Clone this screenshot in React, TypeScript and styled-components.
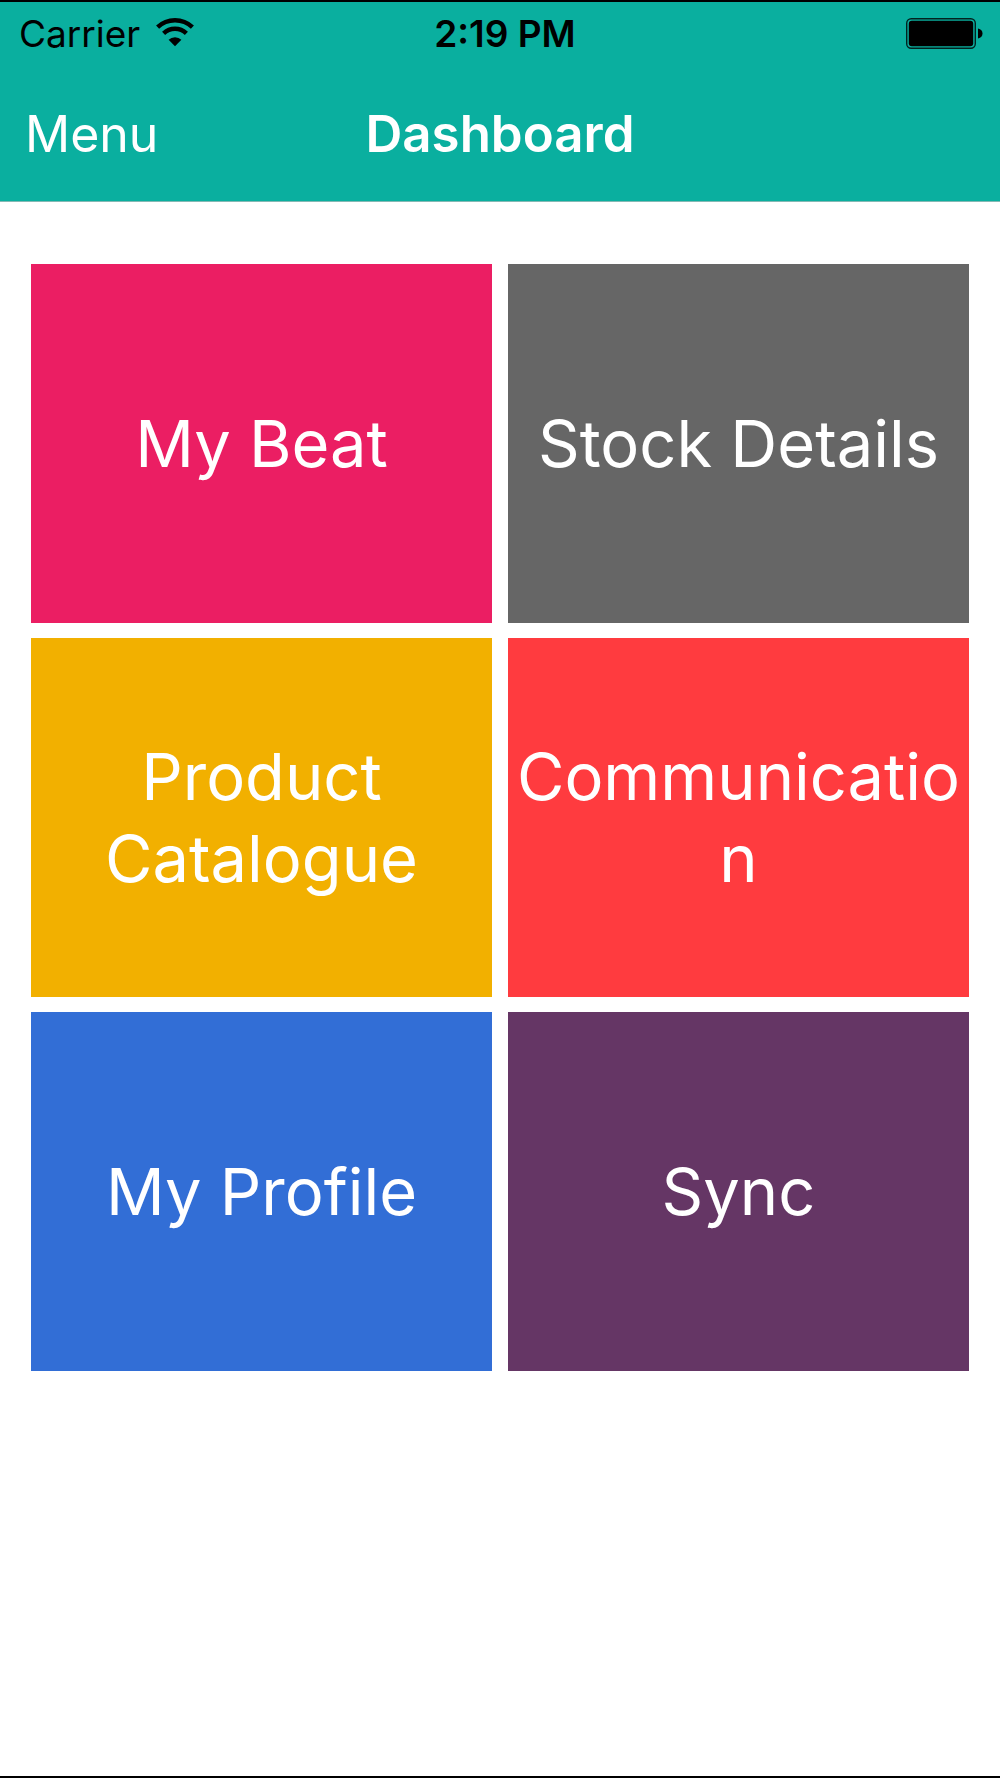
import React from "react";
import styled, { createGlobalStyle } from "styled-components";

const GlobalStyle = createGlobalStyle`
  *, *::before, *::after { box-sizing: border-box; }
  body { margin: 0; background: #fff; }
`;

const Screen = styled.div`
  display: flex;
  flex-direction: column;
  min-height: 100vh;
  border-top: 2px solid #000;
  border-bottom: 2px solid #000;
  background: #fff;
  font-family: Inter, "Liberation Sans", sans-serif;
`;

const Header = styled.header`
  background: #0aaf9f;
  color: #fff;
  border-bottom: 1px solid #84b9b4;
`;

const StatusBar = styled.div`
  display: grid;
  grid-template-columns: 1fr auto 1fr;
  align-items: center;
  height: 64px;
  padding: 0 9px 0 19px;
  color: #000;
  font-size: 37px;
  line-height: 44px;
`;

const Network = styled.div`
  display: flex;
  align-items: center;
  gap: 16px;
`;

const Clock = styled.time`
  font-weight: 600;
`;

const Power = styled.div`
  display: flex;
  justify-content: flex-end;
  padding-right: 8px;
`;

const NavBar = styled.nav`
  display: grid;
  grid-template-columns: 1fr auto 1fr;
  align-items: center;
  height: 135px;
  padding: 0 25px;
`;

const MenuButton = styled.button`
  justify-self: start;
  padding: 0;
  border: 0;
  background: none;
  color: inherit;
  font: inherit;
  font-size: 50px;
  line-height: 64px;
  cursor: pointer;
`;

const Title = styled.h1`
  margin: 0;
  font-size: 51px;
  line-height: 64px;
  font-weight: 600;
`;

const TileGrid = styled.main`
  display: grid;
  grid-template-columns: repeat(2, minmax(0, 1fr));
  grid-auto-rows: 359px;
  gap: 15px 16px;
  padding: 62px 31px;
`;

const Tile = styled.button<{ $color: string }>`
  padding: 0;
  border: 0;
  border-radius: 0;
  background: ${(p) => p.$color};
  color: #fff;
  font: inherit;
  font-size: 65px;
  line-height: 82px;
  text-align: center;
  overflow-wrap: anywhere;
  cursor: pointer;
`;

const tiles = [
  { label: "My Beat", color: "#eb1e63" },
  { label: "Stock Details", color: "#666666" },
  { label: "Product Catalogue", color: "#f2b000" },
  { label: "Communication", color: "#ff3b3f" },
  { label: "My Profile", color: "#326ed6" },
  { label: "Sync", color: "#653665" },
];

const WifiIcon = () => (
  <svg width="38" height="32" viewBox="0 0 38 32" role="img" aria-label="Wi-Fi">
    <g fill="none" stroke="#000" strokeWidth="4.4">
      <path d="M1.600 9.200A25.200 25.200 0 0 1 36.400 9.200" />
      <path d="M7.600 15.400A16.400 16.400 0 0 1 30.400 15.400" />
    </g>
    <path d="M19 28.200L12.600 21.800A9 9 0 0 1 25.400 21.800Z" />
  </svg>
);

const BatteryIcon = () => (
  <svg width="77" height="33" viewBox="0 0 77 33" role="img" aria-label="Battery full">
    <rect x="0.7" y="0.7" width="68.6" height="29.6" rx="4.5" fill="none" stroke="#000" strokeOpacity="0.8" strokeWidth="1.4" />
    <rect x="2.8" y="2.8" width="64.4" height="25.4" rx="3" />
    <path d="M72 10.500C75 11 76.500 13 76.500 15.500S75 20 72 20.500Z" />
  </svg>
);

export default function App() {
  return (
    <>
      <GlobalStyle />
      <Screen>
        <Header>
          <StatusBar>
            <Network>
              <span>Carrier</span>
              <WifiIcon />
            </Network>
            <Clock>2:19 PM</Clock>
            <Power>
              <BatteryIcon />
            </Power>
          </StatusBar>
          <NavBar>
            <MenuButton type="button">Menu</MenuButton>
            <Title>Dashboard</Title>
          </NavBar>
        </Header>
        <TileGrid>
          {tiles.map((tile) => (
            <Tile key={tile.label} type="button" $color={tile.color}>
              {tile.label}
            </Tile>
          ))}
        </TileGrid>
      </Screen>
    </>
  );
}
